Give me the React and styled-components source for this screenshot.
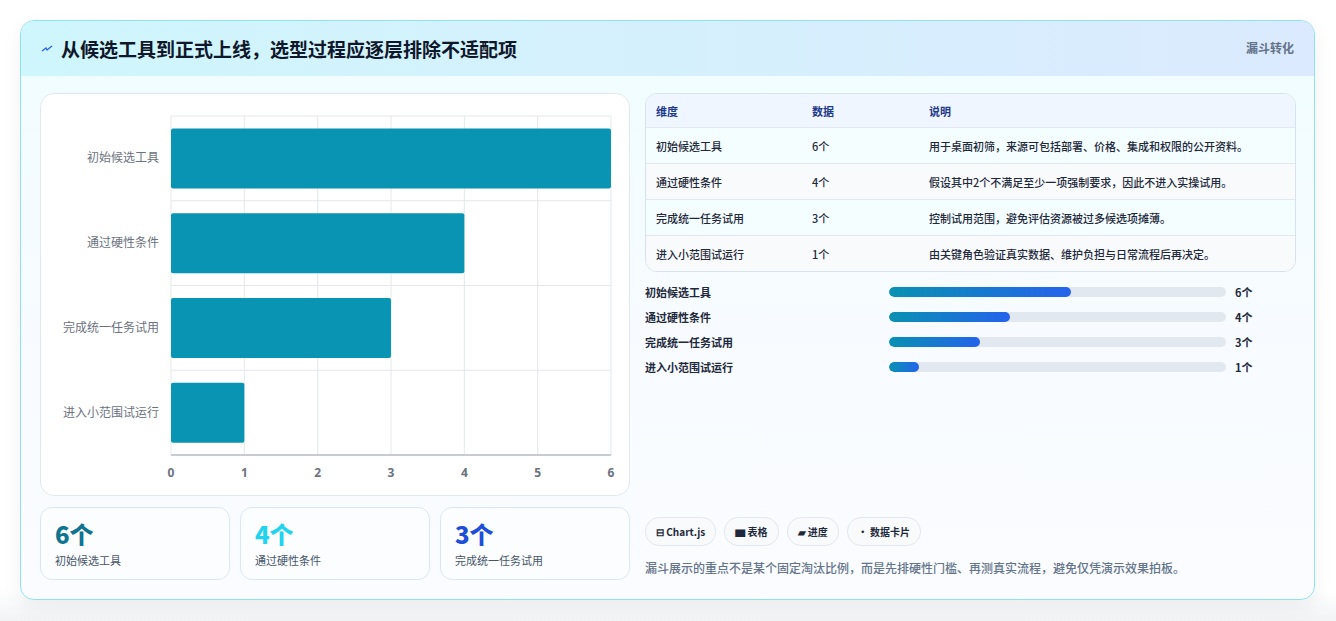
import React from "react";
import styled, { createGlobalStyle } from "styled-components";

const G = createGlobalStyle`
  body{margin:0;background:#fff;font-family:"Noto Sans CJK SC","Noto Sans",sans-serif;}
`;
const Page = styled.div`padding:20px 21px 22px 20px;background:linear-gradient(#fff 0,#fff 590px,#f1f3f5 621px);height:621px;box-sizing:border-box;`;
const Card = styled.div`
  border:1px solid #8ee3ef;border-radius:14px;overflow:hidden;height:580px;box-sizing:border-box;
  background:linear-gradient(180deg,#f0fdff,#f8fbff 60%,#fafcff);
  box-shadow:0 8px 20px rgba(0,0,0,.06);display:flex;flex-direction:column;
`;
const Header = styled.div`
  height:55px;flex:none;display:flex;align-items:center;justify-content:space-between;padding:0 20px;
  background:linear-gradient(90deg,#cff6fc,#dbeafe);
`;
const Title = styled.h1`margin:0;font-size:19px;font-weight:700;color:#0f172a;display:flex;align-items:center;gap:8px;`;
const Badge = styled.span`font-size:12px;font-weight:700;color:#64748b;align-self:flex-start;margin-top:18px;`;
const Body = styled.div`flex:1;display:grid;grid-template-columns:590px 1fr;gap:15px;padding:17px 18px 18px 19px;`;
const Left = styled.div`display:flex;flex-direction:column;gap:11px;`;
const ChartBox = styled.div`height:403px;background:#fff;border:1px solid #e2e8f0;border-radius:14px;box-sizing:border-box;`;
const Stats = styled.div`display:grid;grid-template-columns:repeat(3,1fr);gap:10px;`;
const Stat = styled.div`height:73px;box-sizing:border-box;border:1px solid #dbe7f5;border-radius:12px;background:#fbfdff;padding:10px 14px;`;
const Num = styled.div`font-size:24px;font-weight:800;color:${p=>p.c};line-height:32px;`;
const SLabel = styled.div`font-size:11px;color:#475569;margin-top:2px;`;
const Right = styled.div`display:flex;flex-direction:column;justify-content:space-between;`;
const Table = styled.div`border:1px solid #d6e2ee;border-radius:12px;overflow:hidden;background:#fff;`;
const Row = styled.div`display:grid;grid-template-columns:156px 117px 1fr;height:${p=>p.h?33:35}px;align-items:center;padding:0 10px;font-size:11px;
  color:${p=>p.h?"#1e3a8a":"#1e293b"};font-weight:${p=>p.h?700:500};
  background:${p=>p.h?"#eff6ff":p.alt?"#f8fafc":"#f4fdff"};border-top:${p=>p.first?"none":"1px solid #e2e8f0"};`;
const Bars = styled.div`display:flex;flex-direction:column;gap:11px;margin-top:12px;`;
const PRow = styled.div`display:grid;grid-template-columns:244px 337px auto;align-items:center;gap:0;font-size:11px;font-weight:600;color:#1e293b;height:14px;`;
const Track = styled.div`height:10px;border-radius:5px;background:#e2e8f0;overflow:hidden;`;
const Fill = styled.div`height:100%;border-radius:5px;background:linear-gradient(90deg,#0891b2,#2563eb);`;
const Val = styled.span`padding-left:9px;font-weight:700;`;
const Bottom = styled.div`display:flex;flex-direction:column;gap:13px;padding-bottom:5px;`;
const Chips = styled.div`display:flex;gap:8px;`;
const Chip = styled.span`height:27px;padding:0 10px;border:1px solid #e2e8f0;border-radius:14px;background:#f8fafc;font-size:10px;font-weight:700;color:#1e293b;display:flex;align-items:center;gap:3px;`;
const Note = styled.p`margin:0;font-size:12px;color:#64748b;font-weight:500;`;

const data=[["初始候选工具",6,"用于桌面初筛，来源可包括部署、价格、集成和权限的公开资料。"],["通过硬性条件",4,"假设其中2个不满足至少一项强制要求，因此不进入实操试用。"],["完成统一任务试用",3,"控制试用范围，避免评估资源被过多候选项摊薄。"],["进入小范围试运行",1,"由关键角色验证真实数据、维护负担与日常流程后再决定。"]];

function Chart(){
  const x0=130,x1=570,y0=22,y1=361,step=(y1-y0)/4;
  const sx=v=>x0+(x1-x0)*v/6;
  return <svg width="588" height="401" style={{display:"block"}}>
    {[0,1,2,3,4,5,6].map(v=><line key={v} x1={sx(v)} x2={sx(v)} y1={y0} y2={y1} stroke="#e5e7eb"/>)}
    {[0,1,2,3,4].map(i=><line key={i} x1={x0} x2={x1} y1={y0+i*step} y2={y0+i*step} stroke="#e5e7eb"/>)}
    <line x1={x0} x2={x1} y1={y1} y2={y1} stroke="#9ca3af"/>
    {[0,1,2,3,4,5,6].map(v=><text key={v} x={sx(v)} y={y1+22} fontSize="12" fontWeight="700" fill="#6b7280" textAnchor="middle" fontFamily="Noto Sans">{v}</text>)}
    {data.map((d,i)=>{const cy=y0+step*i+step/2;return <g key={i}>
      <rect x={x0} y={cy-30} width={sx(d[1])-x0} height={60} fill="#0a94b4" rx="2"/>
      <text x={x0-12} y={cy+4} fontSize="12" fill="#6b7280" textAnchor="end" fontFamily="Noto Sans CJK SC">{d[0]}</text></g>})}
  </svg>;
}

export default function App(){
  return <Page><G/><Card>
    <Header><Title><svg width="12" height="10" viewBox="0 0 12 10"><path d="M1 7 L5 4 L6 6 L11 2" stroke="#2563eb" strokeWidth="1.3" fill="none"/></svg>从候选工具到正式上线，选型过程应逐层排除不适配项</Title><Badge>漏斗转化</Badge></Header>
    <Body>
      <Left>
        <ChartBox><Chart/></ChartBox>
        <Stats>
          <Stat><Num c="#0e7490">6个</Num><SLabel>初始候选工具</SLabel></Stat>
          <Stat><Num c="#22d3ee">4个</Num><SLabel>通过硬性条件</SLabel></Stat>
          <Stat><Num c="#1d4ed8">3个</Num><SLabel>完成统一任务试用</SLabel></Stat>
        </Stats>
      </Left>
      <Right>
        <div>
          <Table>
            <Row h first><span>维度</span><span>数据</span><span>说明</span></Row>
            {data.map((d,i)=><Row key={i} alt={i%2===1}><span>{d[0]}</span><span>{d[1]}个</span><span>{d[2]}</span></Row>)}
          </Table>
          <Bars>
            {data.map((d,i)=><PRow key={i}><span>{d[0]}</span><Track><Fill style={{width:`${[54,36,27,9][i]}%`}}/></Track><Val>{d[1]}个</Val></PRow>)}
          </Bars>
        </div>
        <Bottom>
          <Chips><Chip>⊟ Chart.js</Chip><Chip>▆ 表格</Chip><Chip>▰ 进度</Chip><Chip>• 数据卡片</Chip></Chips>
          <Note>漏斗展示的重点不是某个固定淘汰比例，而是先排硬性门槛、再测真实流程，避免仅凭演示效果拍板。</Note>
        </Bottom>
      </Right>
    </Body>
  </Card></Page>;
}
